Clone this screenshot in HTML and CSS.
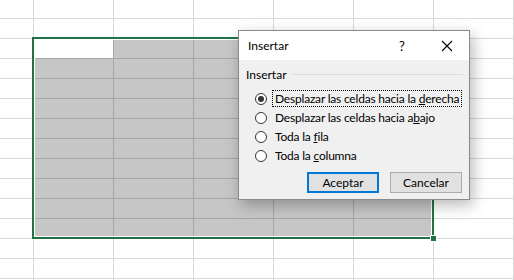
FILE: index.html
```html
<!DOCTYPE html>
<html lang="es">
<head>
    <meta charset="UTF-8">
    <meta name="viewport" content="width=device-width, initial-scale=1.0">
    <title>Insertar</title>
    <link rel="stylesheet" href="styles.css">
</head>
<body>
    <div class="sheet">
        <div class="selection">
            <div class="active-cell"></div>
        </div>
        <div class="fill-handle"></div>
    </div>

    <div class="dialog">
        <div class="titlebar">
            <span class="title">Insertar</span>
            <span class="help">?</span>
            <span class="close">
                <svg width="12" height="12" viewBox="0 0 12 12">
                    <path d="M1 1 L11 11 M11 1 L1 11" stroke="#000" stroke-width="1.1" fill="none"/>
                </svg>
            </span>
        </div>

        <div class="body">
            <div class="group-label">Insertar</div>

            <div class="options">
                <label class="option">
                    <span class="radio checked"></span>
                    <span class="text focused">Desplazar las celdas hacia la <u>d</u>erecha</span>
                </label>
                <label class="option">
                    <span class="radio"></span>
                    <span class="text">Desplazar las celdas hacia a<u>b</u>ajo</span>
                </label>
                <label class="option">
                    <span class="radio"></span>
                    <span class="text">Toda la <u>f</u>ila</span>
                </label>
                <label class="option">
                    <span class="radio"></span>
                    <span class="text">Toda la <u>c</u>olumna</span>
                </label>
            </div>

            <div class="buttons">
                <button class="btn default">Aceptar</button>
                <button class="btn">Cancelar</button>
            </div>
        </div>
    </div>
</body>
</html>
```

FILE: styles.css
```css
* {
    margin: 0;
    padding: 0;
    box-sizing: border-box;
}

body {
    width: 514px;
    height: 280px;
    overflow: hidden;
    font-family: 'Lato', 'Segoe UI', sans-serif;
    font-size: 12px;
    color: #000;
    background: #fff;
    position: relative;
}

/* hoja de calculo: lineas de cuadricula */
.sheet {
    width: 100%;
    height: 100%;
    position: relative;
    background-color: #fff;
    background-image:
        linear-gradient(to right, #d9d9d9 1px, transparent 1px),
        linear-gradient(to bottom, #d9d9d9 1px, transparent 1px);
    background-size: 80px 100%, 100% 20px;
    background-position: 33px 0, 0 18px;
}

/* rango seleccionado */
.selection {
    position: absolute;
    left: 32px;
    top: 37px;
    width: 402px;
    height: 202px;
    border: 2px solid #217346;
    padding: 1px;
    background: #fff;
}

.selection::before {
    content: "";
    position: absolute;
    inset: 1px;
    background-color: #c6c6c6;
    background-image:
        linear-gradient(to right, #a6a6a6 1px, transparent 1px),
        linear-gradient(to bottom, #a6a6a6 1px, transparent 1px);
    background-size: 80px 100%, 100% 20px;
    background-position: 78px 0, 0 18px;
}

.active-cell {
    position: relative;
    width: 78px;
    height: 18px;
    background: #fff;
}

.fill-handle {
    position: absolute;
    left: 430px;
    top: 235px;
    width: 7px;
    height: 7px;
    background: #217346;
    border: 1px solid #fff;
}

/* dialogo */
.dialog {
    position: absolute;
    left: 238px;
    top: 30px;
    width: 232px;
    height: 170px;
    border: 1px solid #8a8a8a;
    background: #f0f0f0;
    box-shadow: 3px 5px 14px rgba(0, 0, 0, 0.28);
    display: flex;
    flex-direction: column;
}

.titlebar {
    height: 29px;
    background: #fff;
    display: flex;
    align-items: center;
    padding-left: 9px;
}

.title {
    flex: 1;
}

.help {
    width: 16px;
    text-align: center;
    font-size: 13px;
    margin-right: 31px;
}

.close {
    width: 12px;
    height: 12px;
    margin-right: 16px;
    display: flex;
}

.body {
    flex: 1;
    padding: 6px 6px 0 7px;
}

.group-label {
    display: flex;
    align-items: center;
    gap: 6px;
    height: 16px;
    margin-bottom: 7px;
}

.group-label::after {
    content: "";
    flex: 1;
    border-top: 1px solid #dcdcdc;
    margin-top: 1px;
}

.options {
    display: flex;
    flex-direction: column;
    padding-left: 9px;
}

.option {
    height: 19px;
    display: flex;
    align-items: center;
    gap: 5px;
    white-space: nowrap;
}

.radio {
    flex: none;
    width: 12px;
    height: 12px;
    border: 1px solid #333;
    border-radius: 50%;
    background: #fff;
    display: flex;
    align-items: center;
    justify-content: center;
}

.radio.checked::after {
    content: "";
    width: 6px;
    height: 6px;
    border-radius: 50%;
    background: #333;
}

.text {
    padding: 0 2px;
    height: 17px;
    line-height: 15px;
    letter-spacing: -0.2px;
    border: 1px solid transparent;
}

.text.focused {
    border: 1px dotted #000;
}

.buttons {
    display: flex;
    justify-content: flex-end;
    gap: 11px;
    margin-top: 7px;
    padding-right: 1px;
}

.btn {
    width: 72px;
    height: 21px;
    font-family: inherit;
    font-size: 12px;
    color: #000;
    background: #e1e1e1;
    border: 1px solid #adadad;
}

.btn.default {
    border: 2px solid #0078d7;
}
```
